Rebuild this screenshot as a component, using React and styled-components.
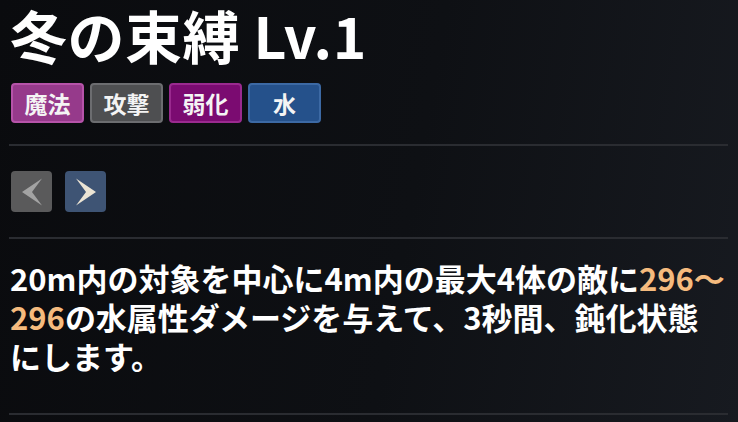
import React from "react";
import styled, { createGlobalStyle } from "styled-components";

// ----- Global -----
const GlobalStyle = createGlobalStyle`
  html, body {
    margin: 0;
    padding: 0;
    background: #0b0c0f;
  }
  body {
    font-family: "Noto Sans CJK JP", "Noto Sans", sans-serif;
  }
`;

// ----- Styled Components -----
const Panel = styled.div`
  width: 738px;
  height: 422px;
  box-sizing: border-box;
  padding: 0 10px 0 9px;
  overflow: hidden;
  background: linear-gradient(100deg, #0a0b0e 0%, #0e1014 55%, #171a20 100%);
  display: flex;
  flex-direction: column;
`;

const Title = styled.h1`
  margin: 0;
  padding: 0 0 0 1px;
  font-family: "Noto Sans CJK JP", "Noto Sans", sans-serif;
  font-size: 57px;
  font-weight: 700;
  line-height: 68px;
  color: #ffffff;
  letter-spacing: 0.5px;
  white-space: nowrap;
`;

const TagRow = styled.div`
  display: flex;
  gap: 6px;
  margin: 15px 0 0 2px;
`;

const tagColors = {
  magic: { bg: "#963a8b", border: "#b653a9" },
  attack: { bg: "#4e4f51", border: "#6c6d70" },
  debuff: { bg: "#7b0b71", border: "#9a2a8f" },
  water: { bg: "#25518b", border: "#3c69a4" },
};

const Tag = styled.span`
  width: 73px;
  height: 40px;
  box-sizing: border-box;
  display: flex;
  align-items: center;
  justify-content: center;
  border-radius: 4px;
  border: 2px solid ${({ kind }) => tagColors[kind].border};
  background: ${({ kind }) => tagColors[kind].bg};
  color: #f4f4f4;
  font-family: "Noto Sans CJK JP", sans-serif;
  font-size: 23px;
  font-weight: 700;
  line-height: 1;
`;

const Divider = styled.hr`
  margin: ${({ top }) => top}px 0 0;
  border: none;
  height: 2px;
  flex-shrink: 0;
  background: #2a2c31;
`;

const NavRow = styled.div`
  display: flex;
  gap: 13px;
  margin: 25px 0 0 2px;
`;

const NavButton = styled.button`
  width: 41px;
  height: 41px;
  padding: 0;
  border: none;
  border-radius: 4px;
  background: ${({ active }) => (active ? "#3e5474" : "#5a5a5b")};
  color: ${({ active }) => (active ? "#ebe4d4" : "#a3a3a3")};
  display: flex;
  align-items: center;
  justify-content: center;
  cursor: pointer;
`;

const Description = styled.p`
  margin: 19px 0 0 1px;
  font-family: "Noto Sans CJK JP", "Noto Sans", sans-serif;
  font-size: 31px;
  font-weight: 700;
  line-height: 39px;
  white-space: nowrap;
  color: #ffffff;
`;

const Num = styled.span`
  color: #f5bb7e;
`;

const Chevron = ({ dir }) => (
  <svg width="26" height="30" viewBox="0 0 26 30">
    {dir === "left" ? (
      <path d="M23 1.5 L3 15 L23 28.5 L13 15 Z" fill="currentColor" />
    ) : (
      <path d="M3 1.5 L23 15 L3 28.5 L13 15 Z" fill="currentColor" />
    )}
  </svg>
);

// ----- Main Component -----
const App = () => {
  const tags = [
    { label: "魔法", kind: "magic" },
    { label: "攻撃", kind: "attack" },
    { label: "弱化", kind: "debuff" },
    { label: "水", kind: "water" },
  ];

  return (
    <>
      <GlobalStyle />
      <Panel>
        <Title>冬の束縛 Lv.1</Title>

        <TagRow>
          {tags.map((t) => (
            <Tag key={t.label} kind={t.kind}>
              {t.label}
            </Tag>
          ))}
        </TagRow>

        <Divider top={21} />

        <NavRow>
          <NavButton aria-label="前へ">
            <Chevron dir="left" />
          </NavButton>
          <NavButton active aria-label="次へ">
            <Chevron dir="right" />
          </NavButton>
        </NavRow>

        <Divider top={25} />

        <Description>
          20m内の対象を中心に4m内の最大4体の敵に<Num>296〜</Num>
          <br />
          <Num>296</Num>の水属性ダメージを与えて、3秒間、鈍化状態
          <br />
          にします。
        </Description>

        <Divider top={38} />
      </Panel>
    </>
  );
};

export default App;
